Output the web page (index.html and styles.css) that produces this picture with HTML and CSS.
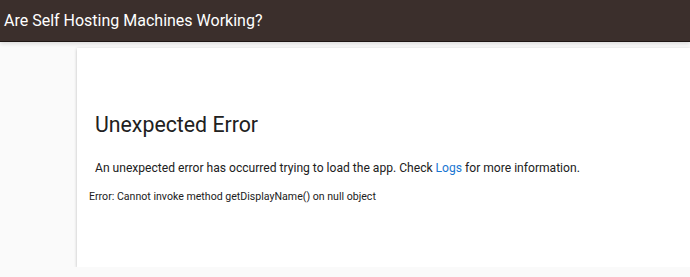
FILE: index.html
```html
<!DOCTYPE html>
<html lang="en">
<head>
  <meta charset="UTF-8" />
  <meta name="viewport" content="width=device-width, initial-scale=1" />
  <title>Are Self Hosting Machines Working?</title>
  <link rel="stylesheet" href="styles.css">
</head>
<body>
  <header class="app-bar">
    <h1>Are Self Hosting Machines Working?</h1>
  </header>

  <main class="page">
    <!-- Error card -->
    <section class="error-card">
      <h2>Unexpected Error</h2>
      <p class="message">An unexpected error has occurred trying to load the app. Check <a href="#">Logs</a> for more information.</p>
      <p class="detail">Error: Cannot invoke method getDisplayName() on null object</p>
    </section>
  </main>
</body>
</html>
```

FILE: styles.css
```css
body { font-family: Roboto, 'Liberation Sans', sans-serif; background: #fafafa; margin: 0; padding: 0; color: #212121; overflow: hidden; }

.app-bar {
  background: #3b2f2c;
  height: 41px;
  border-bottom: 1px solid #1e1614;
  box-shadow: 0 2px 4px rgba(0, 0, 0, 0.12);
  display: flex;
  align-items: center;
  padding: 0 4px;
}

.app-bar h1 {
  margin: 0;
  font-size: 16px;
  font-weight: 400;
  color: #fff;
}

.page {
  padding: 6px 0 0 77px;
}

.error-card {
  background: #fff;
  height: 219px;
  box-shadow: 0 1px 3px rgba(0, 0, 0, 0.25);
  padding: 64px 0 0 18px;
  box-sizing: border-box;
}

.error-card h2 {
  margin: 0 0 24px;
  font-size: 21.3px;
  font-weight: 400;
}

.message {
  margin: 0 0 15px;
  font-size: 12.1px;
}

.message a {
  color: #1976d2;
  text-decoration: none;
}

.detail {
  margin: 0 0 0 -6px;
  font-size: 10.6px;
}
```
